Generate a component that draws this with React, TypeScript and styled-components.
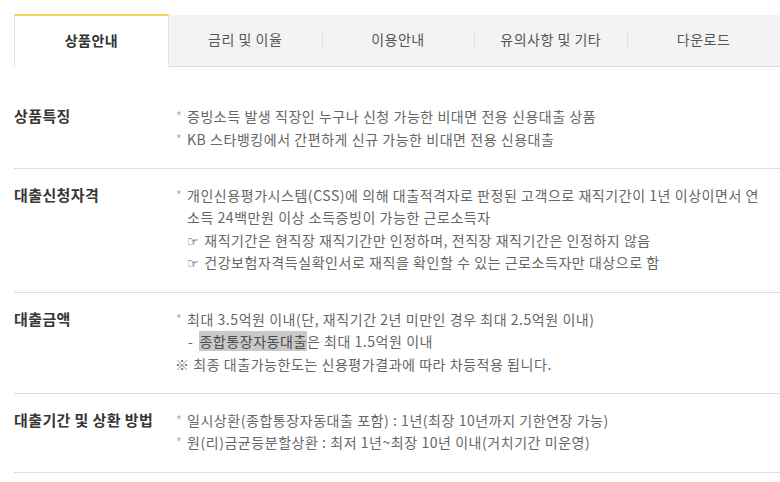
import React from "react";
import styled, { createGlobalStyle, css } from "styled-components";

const GlobalStyle = createGlobalStyle`
  html, body { margin: 0; padding: 0; background: #fff; }
  body {
    font-family: "Noto Sans CJK KR", "Noto Sans", sans-serif;
    width: 780px;
    overflow: hidden;
  }
`;

const Page = styled.div`
  padding: 14px 0 0 14px;
`;

const TabBar = styled.ul`
  display: flex;
  margin: 0;
  padding: 0;
  list-style: none;
  height: 53px;
`;

const Tab = styled.li<{ $active?: boolean; $sep?: boolean }>`
  position: relative;
  flex: 1;
  display: flex;
  align-items: center;
  justify-content: center;
  font-size: 14px;
  letter-spacing: 0.5px;
  box-sizing: border-box;
  padding-bottom: 4px;
  ${(p) =>
    p.$active
      ? css`
          background: #fff;
          color: #333;
          font-weight: 700;
          border-top: 2px solid #f3d84f;
          border-left: 1px solid #e4e4e4;
          border-right: 1px solid #e4e4e4;
        `
      : css`
          background: #f3f3f3;
          color: #555;
          margin-top: 1px;
          border-bottom: 1px solid #dcdcdc;
        `}
  ${(p) =>
    p.$sep &&
    css`
      &::before {
        content: "";
        position: absolute;
        left: 0;
        top: 16px;
        height: 18px;
        width: 1px;
        background: #e0e0e0;
      }
    `}
`;

const Sections = styled.div`
  margin-top: 23px;
`;

const Section = styled.section`
  display: grid;
  grid-template-columns: 161px 1fr;
  padding: 15px 0 17.5px;
  border-bottom: 1px solid #dedede;
  line-height: 22.6px;
`;

const Label = styled.h3`
  margin: 0;
  font-size: 15px;
  font-weight: 700;
  color: #3a3633;
  letter-spacing: 0.4px;
`;

const Body = styled.div`
  font-size: 14px;
  color: #666;
  letter-spacing: 0.55px;
  white-space: nowrap;
`;

const Bullet = styled.div`
  position: relative;
  padding-left: 12px;
  &::before {
    content: "*";
    position: absolute;
    left: 1px;
    top: 0;
    font-size: 12px;
    color: #9db0c4;
  }
`;

const Sub = styled.div<{ $indent?: number }>`
  padding-left: ${(p) => p.$indent ?? 12}px;
`;

const Hand = styled.span`
  font-family: "DejaVu Sans", sans-serif;
  font-size: 13px;
  font-weight: 700;
  line-height: 1;
  margin-right: 5px;
  color: #333;
`;

const Dash = styled.span`
  margin-right: 6px;
`;

const Mark = styled.span`
  background: #c9c9c9;
  color: #4a4a4a;
`;

const tabs = ["상품안내", "금리 및 이율", "이용안내", "유의사항 및 기타", "다운로드"];

export default function App() {
  return (
    <>
      <GlobalStyle />
      <Page>
        <TabBar>
          {tabs.map((t, i) => (
            <Tab key={t} $active={i === 0} $sep={i > 1}>
              {t}
            </Tab>
          ))}
        </TabBar>
        <Sections>
          <Section>
            <Label>상품특징</Label>
            <Body>
              <Bullet>증빙소득 발생 직장인 누구나 신청 가능한 비대면 전용 신용대출 상품</Bullet>
              <Bullet>KB 스타뱅킹에서 간편하게 신규 가능한 비대면 전용 신용대출</Bullet>
            </Body>
          </Section>
          <Section>
            <Label>대출신청자격</Label>
            <Body>
              <Bullet>
                개인신용평가시스템(CSS)에 의해 대출적격자로 판정된 고객으로 재직기간이 1년 이상이면서 연
                <br />
                소득 24백만원 이상 소득증빙이 가능한 근로소득자
              </Bullet>
              <Sub>
                <Hand>☞</Hand>재직기간은 현직장 재직기간만 인정하며, 전직장 재직기간은 인정하지 않음
              </Sub>
              <Sub>
                <Hand>☞</Hand>건강보험자격득실확인서로 재직을 확인할 수 있는 근로소득자만 대상으로 함
              </Sub>
            </Body>
          </Section>
          <Section>
            <Label>대출금액</Label>
            <Body>
              <Bullet>최대 3.5억원 이내(단, 재직기간 2년 미만인 경우 최대 2.5억원 이내)</Bullet>
              <Sub $indent={13}>
                <Dash>-</Dash>
                <Mark>종합통장자동대출</Mark>은 최대 1.5억원 이내
              </Sub>
              <Sub $indent={0}>※ 최종 대출가능한도는 신용평가결과에 따라 차등적용 됩니다.</Sub>
            </Body>
          </Section>
          <Section>
            <Label>대출기간 및 상환 방법</Label>
            <Body>
              <Bullet>일시상환(종합통장자동대출 포함) : 1년(최장 10년까지 기한연장 가능)</Bullet>
              <Bullet>원(리)금균등분할상환 : 최저 1년~최장 10년 이내(거치기간 미운영)</Bullet>
            </Body>
          </Section>
        </Sections>
      </Page>
    </>
  );
}
